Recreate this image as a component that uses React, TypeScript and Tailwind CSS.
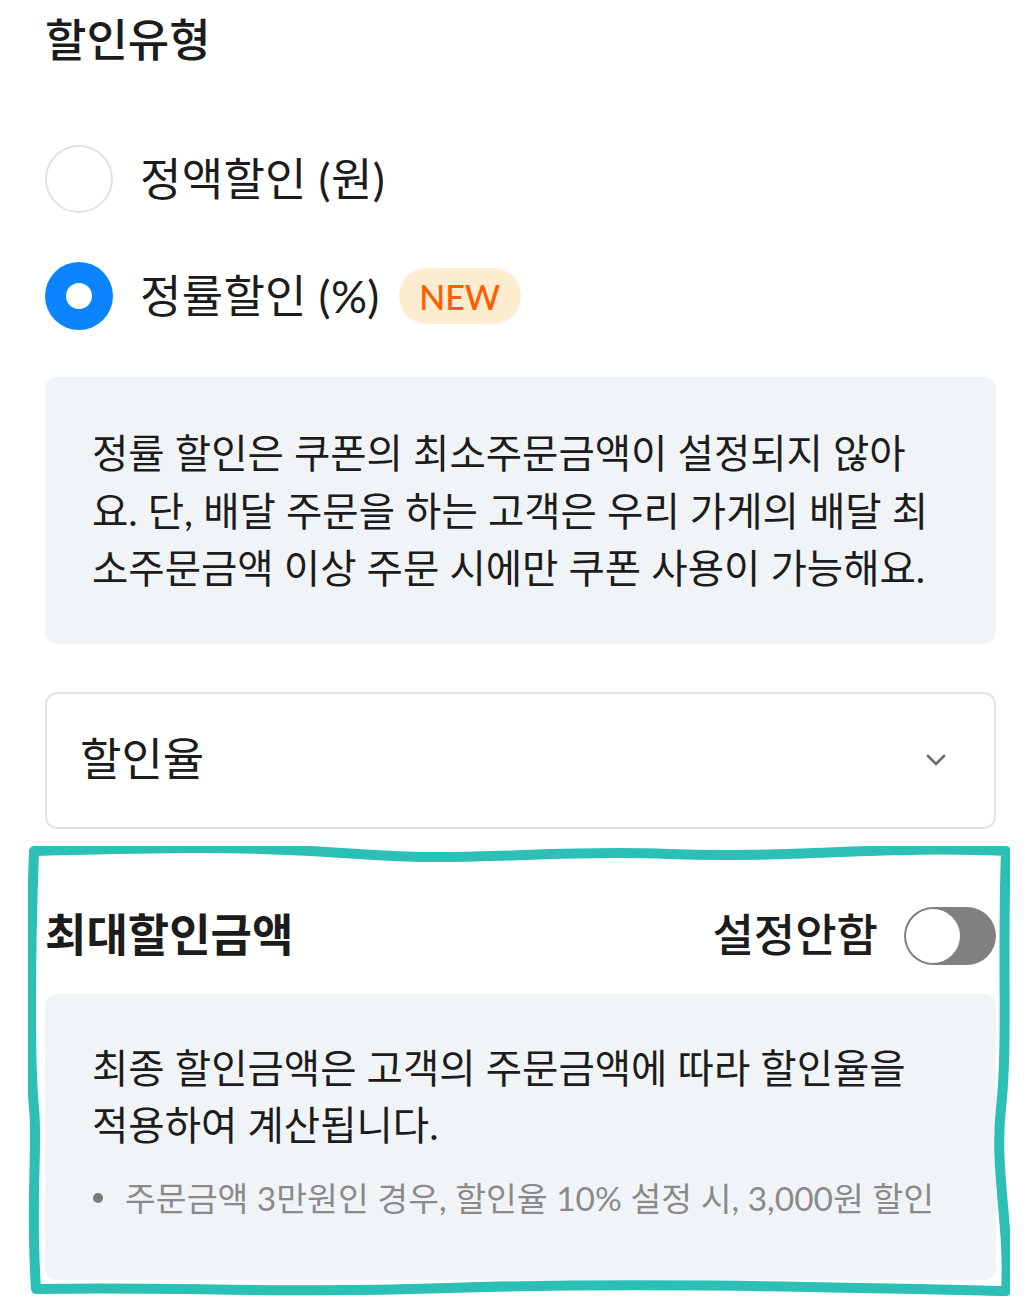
import { ChevronDown } from 'lucide-react'

const font = { fontFamily: 'Lato, "Noto Sans CJK KR", sans-serif' }

function Radio({ checked }: { checked?: boolean }) {
  if (checked) {
    return (
      <span className="flex h-[68px] w-[68px] shrink-0 items-center justify-center rounded-full bg-[#0a84ff]">
        <span className="h-[26px] w-[26px] rounded-full bg-white" />
      </span>
    )
  }
  return <span className="h-[68px] w-[68px] shrink-0 rounded-full border-2 border-[#e2e2e2] bg-white" />
}

function Toggle() {
  return (
    <span className="flex h-[58px] w-[92px] items-center rounded-full bg-[#7e8081] p-[2px]">
      <span className="h-[54px] w-[54px] rounded-full bg-white" />
    </span>
  )
}

export default function App() {
  return (
    <div className="min-h-[1310px] w-[1036px] bg-white pl-[45px] pr-[40px] pt-[10px] text-[#1c1c1c]" style={font}>
      <h2 className="text-[45px] font-medium leading-[61px]">할인유형</h2>

      <div className="mt-[74px] flex flex-col gap-[49px]">
        <label className="flex h-[68px] items-center gap-[27px]">
          <Radio />
          <span className="text-[45px] leading-none tracking-[0.3px]">정액할인 (원)</span>
        </label>
        <label className="flex h-[68px] items-center gap-[27px]">
          <Radio checked />
          <span className="text-[45px] leading-none tracking-[0.3px]">정률할인 (%)</span>
          <span className="-ml-[8px] flex h-[56px] w-[122px] items-center justify-center rounded-full bg-[#feecd1] text-[34px] font-medium text-[#ff5c00]">
            NEW
          </span>
        </label>
      </div>

      <div className="mt-[47px] rounded-[12px] bg-[#f1f4f7] py-[47px] pl-[47px] pr-[61px] text-[39.5px] leading-[57.5px]">
        정률 할인은 쿠폰의 최소주문금액이 설정되지 않아요. 단, 배달 주문을 하는 고객은 우리 가게의 배달 최소주문금액 이상 주문 시에만 쿠폰 사용이 가능해요.
      </div>

      <div className="mt-[48px] flex h-[137px] items-center justify-between rounded-[12px] border-2 border-[#e3e3e3] pl-[33px] pr-[42px]">
        <span className="text-[45px]">할인율</span>
        <ChevronDown className="h-[32px] w-[32px] text-[#6b6b6b]" strokeWidth={2} />
      </div>

      <section className="relative pt-[77px]">
        <div className="flex h-[60px] items-center justify-between">
          <h3 className="text-[45px] font-bold">최대할인금액</h3>
          <div className="flex items-center gap-[26px]">
            <span className="text-[45px] font-medium">설정안함</span>
            <Toggle />
          </div>
        </div>

        <div className="mt-[28px] rounded-[12px] bg-[#f1f4f7] pb-[58px] pl-[47px] pr-[61px] pt-[45px]">
          <p className="text-[39.5px] leading-[57.5px]">
            최종 할인금액은 고객의 주문금액에 따라 할인율을 적용하여 계산됩니다.
          </p>
          <ul className="mt-[20px]">
            <li className="flex items-center gap-[22px] text-[33.5px] leading-[48px] text-[#8a8a8a]">
              <span className="ml-[1px] h-[10px] w-[10px] shrink-0 rounded-full bg-[#7a7a7a]" />
              주문금액 3만원인 경우, 할인율 10% 설정 시, 3,000원 할인
            </li>
          </ul>
        </div>

        {/* annotation outline drawn over the section */}
        <svg
          className="pointer-events-none absolute left-[-17px] top-[17px]"
          width="982"
          height="450"
          viewBox="0 0 982 450"
          fill="none"
        >
          <path
            d="M6 5 C120 2 210 -1 330 8 S 520 3 640 8 S 860 -1 978 5 C 974 110 980 200 973 262 S 982 380 978 445 C 800 441 600 436 420 442 S 150 440 8 443 C 2 350 10 300 6 262 S 2 110 6 5 Z"
            stroke="#2bbfb5"
            strokeWidth="10"
            strokeLinejoin="round"
          />
        </svg>
      </section>
    </div>
  )
}
